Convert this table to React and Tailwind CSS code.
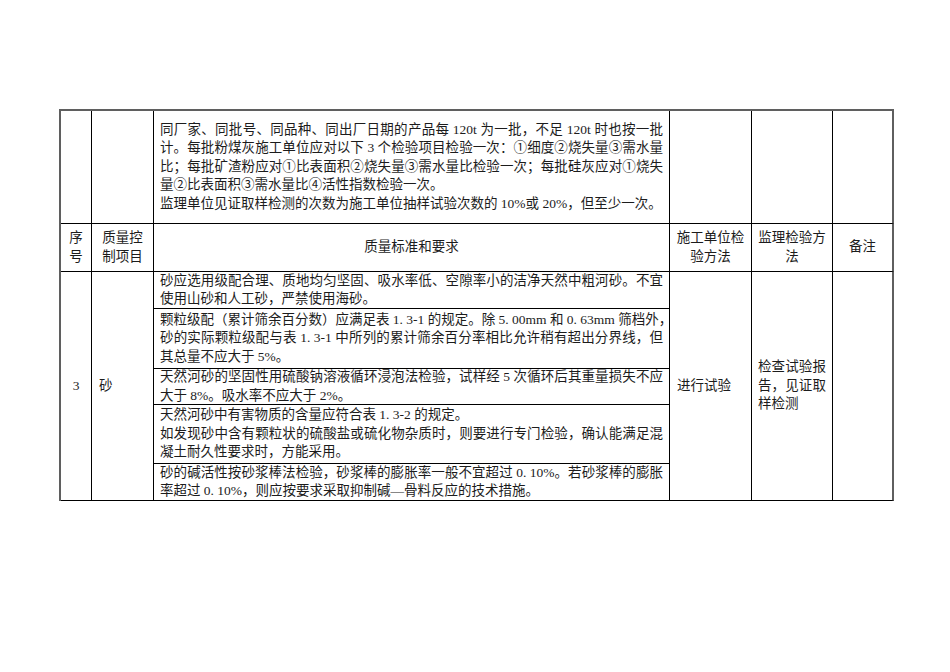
const FONT = "font-['Liberation_Serif','Noto_Sans_CJK_SC',serif]";

// one printed line; justified lines are stretched to the full cell width
const Line = ({ text, full }) => (
  <div className={full ? "whitespace-pre text-justify [text-align-last:justify]" : "whitespace-pre"}>
    {text}
  </div>
);

const Para = ({ lines }) => (
  <>
    {lines.map((t, i) => (
      <Line key={i} text={t} full={i < lines.length - 1 && !t.endsWith("。")} />
    ))}
  </>
);

const cell = "border-r border-b border-black box-border flex flex-col justify-center";
const lastCol = "border-b border-black border-r-2 border-r-[#5f5f5f] box-border flex flex-col justify-center";

const rows = [
  [
    "砂应选用级配合理、质地均匀坚固、吸水率低、空隙率小的洁净天然中粗河砂。不宜",
    "使用山砂和人工砂，严禁使用海砂。",
  ],
  [
    "颗粒级配（累计筛余百分数）应满足表 1. 3-1 的规定。除 5. 00mm 和 0. 63mm 筛档外，",
    "砂的实际颗粒级配与表 1. 3-1 中所列的累计筛余百分率相比允许稍有超出分界线，但",
    "其总量不应大于 5%。",
  ],
  [
    "天然河砂的坚固性用硫酸钠溶液循环浸泡法检验，试样经 5 次循环后其重量损失不应",
    "大于 8%。吸水率不应大于 2%。",
  ],
  [
    "天然河砂中有害物质的含量应符合表 1. 3-2 的规定。",
    "如发现砂中含有颗粒状的硫酸盐或硫化物杂质时，则要进行专门检验，确认能满足混",
    "凝土耐久性要求时，方能采用。",
  ],
  [
    "砂的碱活性按砂浆棒法检验，砂浆棒的膨胀率一般不宜超过 0. 10%。若砂浆棒的膨胀",
    "率超过 0. 10%，则应按要求采取抑制碱—骨料反应的技术措施。",
  ],
];

const rowStart = ["row-start-3", "row-start-4", "row-start-5", "row-start-6", "row-start-7"];

export default function App() {
  return (
    <div className={`w-[950px] h-[672px] bg-white pt-[109px] pl-[59px] text-[13.5px] leading-[18.5px] text-[#1c1c1c] ${FONT}`}>
      <div className="grid w-[835px] grid-cols-[31px_62px_516px_82px_81px_61px] grid-rows-[113px_48px_37px_60px_36px_59px_37px] border-t-2 border-l-2 border-[#5f5f5f]">
        {/* continued row from previous page */}
        <div className={cell}></div>
        <div className={cell}></div>
        <div className={`${cell} px-[6px]`}>
          <Line full text="同厂家、同批号、同品种、同出厂日期的产品每 120t 为一批，不足 120t 时也按一批" />
          <Line full text="计。每批粉煤灰施工单位应对以下 3 个检验项目检验一次：①细度②烧失量③需水量" />
          <Line full text="比；每批矿渣粉应对①比表面积②烧失量③需水量比检验一次；每批硅灰应对①烧失" />
          <Line text="量②比表面积③需水量比④活性指数检验一次。" />
          <Line text="监理单位见证取样检测的次数为施工单位抽样试验次数的 10%或 20%，但至少一次。" />
        </div>
        <div className={cell}></div>
        <div className={cell}></div>
        <div className={lastCol}></div>

        {/* header */}
        <div className={`${cell} items-center text-center`}>
          <div>序</div>
          <div>号</div>
        </div>
        <div className={`${cell} items-center text-center`}>
          <div>质量控</div>
          <div>制项目</div>
        </div>
        <div className={`${cell} items-center text-center`}>质量标准和要求</div>
        <div className={`${cell} items-center text-center`}>
          <div>施工单位检</div>
          <div>验方法</div>
        </div>
        <div className={`${cell} items-center text-center`}>
          <div>监理检验方</div>
          <div>法</div>
        </div>
        <div className={`${lastCol} items-center text-center`}>备注</div>

        {/* 3 砂 */}
        <div className={`${cell} col-start-1 row-start-3 row-span-5 items-center`}>3</div>
        <div className={`${cell} col-start-2 row-start-3 row-span-5 px-[7px]`}>砂</div>
        {rows.map((lines, i) => (
          <div key={i} className={`${cell} col-start-3 ${rowStart[i]} px-[6px]`}>
            <Para lines={lines} />
          </div>
        ))}
        <div className={`${cell} col-start-4 row-start-3 row-span-5 px-[7px]`}>进行试验</div>
        <div className={`${cell} col-start-5 row-start-3 row-span-5 px-[6px]`}>
          <Line full text="检查试验报" />
          <Line full text="告，见证取" />
          <Line text="样检测" />
        </div>
        <div className={`${lastCol} col-start-6 row-start-3 row-span-5`}></div>
      </div>
    </div>
  );
}
